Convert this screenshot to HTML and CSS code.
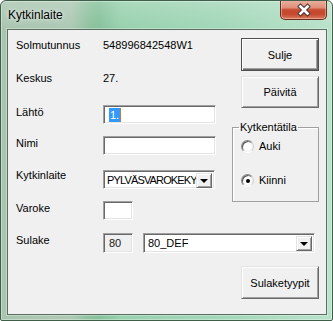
FILE: index.html
```html
<!DOCTYPE html>
<html>
<head>
<meta charset="utf-8">
<link rel="stylesheet" href="styles.css">
</head>
<body>
<div class="window">
  <div class="titlebar">
    <span class="title">Kytkinlaite</span>
    <div class="close">
      <svg width="47" height="20" viewBox="0 0 47 20">
        <path d="M20.5 6.5 L27.5 13.5 M27.5 6.5 L20.5 13.5" stroke="#4a3a36" stroke-width="4.6" stroke-linecap="square" fill="none"/>
        <path d="M20.5 6.5 L27.5 13.5 M27.5 6.5 L20.5 13.5" stroke="#ffffff" stroke-width="2.6" stroke-linecap="square" fill="none"/>
      </svg>
    </div>
  </div>
  <div class="client">
    <div class="top">
      <div class="form">
        <span class="lbl">Solmutunnus</span><span class="val">548996842548W1</span>
        <span class="lbl">Keskus</span><span class="val">27.</span>
        <span class="lbl">Lähtö</span><div class="edit"><span class="sel">1.</span><span class="caret"></span></div>
        <span class="lbl">Nimi</span><div class="edit"></div>
        <span class="lbl lbl-up">Kytkinlaite</span><div class="combo w112"><span class="ctext">PYLVÄSVAROKEKY</span><span class="drop"><i class="tri"></i></span></div>
        <span class="lbl">Varoke</span><div class="edit small"></div>
      </div>
      <div class="side">
        <button class="btn default">Sulje</button>
        <button class="btn second">Päivitä</button>
        <fieldset class="frame">
          <legend>Kytkentätila</legend>
          <div class="radio"><span class="circle"></span>Auki</div>
          <div class="radio"><span class="circle on"></span>Kiinni</div>
        </fieldset>
      </div>
    </div>
    <div class="sulake">
      <span class="lbl">Sulake</span>
      <div class="edit small disabled">80</div>
      <div class="combo w172"><span class="ctext wide">80_DEF</span><span class="drop"><i class="tri"></i></span></div>
    </div>
    <div class="bottom">
      <button class="btn">Sulaketyypit</button>
    </div>
  </div>
</div>
</body>
</html>
```

FILE: styles.css
```css
html, body {
  margin: 0;
  padding: 0;
  background: #ffffff;
}
body {
  width: 333px;
  height: 321px;
  overflow: hidden;
  font-family: "Liberation Sans", Arial, sans-serif;
  font-size: 11px;
  color: #000;
}
.window {
  width: 333px;
  height: 321px;
  box-sizing: border-box;
  border: 1px solid #3f5f48;
  border-radius: 6px 6px 2px 2px;
  background:
    linear-gradient(180deg, rgba(255,255,255,0.18) 0, rgba(255,255,255,0) 28px),
    linear-gradient(90deg, #a9c5b0 0, #adc9b4 70px, #8fc29f 88px, #86c29b 98px, #98d1ad 120px, #a2d7b8 220px, #b2dfc5 300px, #b9e2cb 333px);
  box-shadow: inset 0 0 0 1px rgba(255,255,255,0.35);
  overflow: hidden;
}
.titlebar {
  height: 28px;
  display: flex;
  align-items: flex-start;
  padding-left: 7px;
}
.title {
  font-family: "Liberation Sans", Arial, sans-serif;
  font-size: 12px;
  line-height: 14px;
  margin-top: 7px;
  color: #000;
  text-shadow: 0 0 6px rgba(255,255,255,0.8), 0 0 3px rgba(255,255,255,0.6);
}
.close {
  margin-left: auto;
  margin-right: 5px;
  margin-top: -1px;
  width: 47px;
  height: 20px;
  box-sizing: border-box;
  border: 1px solid #6b2c22;
  border-top: none;
  border-radius: 0 0 5px 5px;
  background: linear-gradient(180deg, #eab3a4 0, #df8e78 40%, #c8492f 52%, #c54a30 75%, #da7a5f 100%);
  box-shadow: inset 0 0 0 1px rgba(255,220,200,0.45);
  position: relative;
}
.close svg {
  position: absolute;
  left: -1px;
  top: 0;
}
.client {
  margin-left: 6px;
  width: 320px;
  height: 286px;
  box-sizing: border-box;
  border: 1px solid #5c6e62;
  box-shadow: 0 0 0 1px rgba(255,255,255,0.3);
  background: #f0f0f0;
  padding: 8px 0 0 8px;
}
.top {
  display: flex;
  align-items: flex-start;
}
.form {
  display: grid;
  grid-template-columns: 87px 113px;
  grid-template-rows: 33px 34px 31px 34px 31px 32px;
  align-items: start;
}
.lbl {
  line-height: 14px;
}
.lbl-up {
  margin-top: -2px;
}
.val {
  line-height: 14px;
}
.edit {
  box-sizing: border-box;
  height: 19px;
  width: 113px;
  background: #fff;
  border-style: solid;
  border-width: 1px;
  border-color: #a0a0a0 #ffffff #ffffff #a0a0a0;
  box-shadow: inset 1px 1px 0 #696969, inset -1px -1px 0 #e3e3e3;
  padding: 2px 0 0 5px;
  display: flex;
  align-items: flex-start;
  line-height: 14px;
}
.edit.small {
  width: 30px;
}
.edit.disabled {
  background: #f0f0f0;
  padding-left: 5px;
  color: #1a1a1a;
  height: 20px;
}
.sel {
  background: #3399ff;
  color: #fff;
  padding: 0 1px;
  height: 14px;
}
.caret {
  width: 1px;
  height: 14px;
  background: #c67b2e;
}
.combo {
  box-sizing: border-box;
  height: 19px;
  background: #fff;
  border-style: solid;
  border-width: 1px;
  border-color: #a0a0a0 #ffffff #ffffff #a0a0a0;
  box-shadow: inset 1px 1px 0 #696969, inset -1px -1px 0 #e3e3e3;
  display: flex;
  align-items: flex-start;
  padding: 2px 2px 2px 2px;
}
.combo.w112 { width: 112px; }
.combo.w172 { width: 172px; height: 20px; }
.ctext {
  flex: 1;
  min-width: 0;
  overflow: hidden;
  white-space: nowrap;
  line-height: 14px;
  padding-left: 1px;
  letter-spacing: -0.85px;
}
.ctext.wide {
  letter-spacing: 0;
  padding-left: 2px;
}
.drop {
  width: 16px;
  height: 15px;
  box-sizing: border-box;
  background: #f0f0f0;
  border-style: solid;
  border-width: 1px;
  border-color: #e3e3e3 #696969 #696969 #e3e3e3;
  box-shadow: inset 1px 1px 0 #fff, inset -1px -1px 0 #a0a0a0;
  display: flex;
  align-items: center;
  justify-content: center;
  flex: none;
}
.tri {
  width: 0;
  height: 0;
  border-left: 4px solid transparent;
  border-right: 4px solid transparent;
  border-top: 4px solid #000;
  margin-top: 1px;
}
.side {
  margin-left: 16px;
  width: 87px;
  display: flex;
  flex-direction: column;
  align-items: flex-end;
}
.btn {
  font-family: "Liberation Sans", Arial, sans-serif;
  font-size: 11px;
  color: #000;
  width: 78px;
  height: 33px;
  box-sizing: border-box;
  background: #f0f0f0;
  border-style: solid;
  border-width: 1px;
  border-color: #e3e3e3 #696969 #696969 #e3e3e3;
  box-shadow: inset 1px 1px 0 #fff, inset -1px -1px 0 #a0a0a0;
  padding: 0;
  margin: 0;
}
.btn.default {
  border-color: #4f4f4f;
  box-shadow: inset 1px 1px 0 #fff, inset -1px -1px 0 #696969, inset -2px -2px 0 #a0a0a0;
}
.btn.second {
  margin-top: 5px;
  height: 32px;
}
.frame {
  align-self: flex-start;
  margin: 13px 0 0 0;
  width: 87px;
  height: 81px;
  box-sizing: border-box;
  padding: 0;
  border: 1px solid #a0a0a0;
  box-shadow: inset 1px 1px 0 #fff;
}
.frame legend {
  padding: 0 1px;
  margin-left: 6px;
  line-height: 13px;
  font-size: 11px;
}
.radio {
  display: flex;
  align-items: center;
  height: 13px;
  line-height: 13px;
  padding-left: 8px;
  margin-top: 21px;
}
.radio:first-of-type {
  margin-top: 6px;
}
.circle {
  width: 13px;
  height: 13px;
  box-sizing: border-box;
  border-radius: 50%;
  border: 1px solid;
  border-color: #8a8a8a #d0d0d0 #ffffff #8a8a8a;
  background: radial-gradient(circle at 50% 50%, #ffffff 0 45%, #f4f4f4 60%, #e6e6e6 100%);
  box-shadow: inset 1px 1px 0 #555;
  margin-right: 5px;
  position: relative;
  flex: none;
}
.circle.on::after {
  content: "";
  position: absolute;
  left: 3.5px;
  top: 3.5px;
  width: 4px;
  height: 4px;
  border-radius: 50%;
  background: #000;
}
.sulake {
  display: flex;
  align-items: flex-start;
  height: 20px;
}
.sulake .lbl {
  width: 87px;
}
.sulake .combo {
  margin-left: 10px;
}
.bottom {
  display: flex;
  justify-content: flex-end;
  padding-right: 7px;
  margin-top: 13px;
}
```
